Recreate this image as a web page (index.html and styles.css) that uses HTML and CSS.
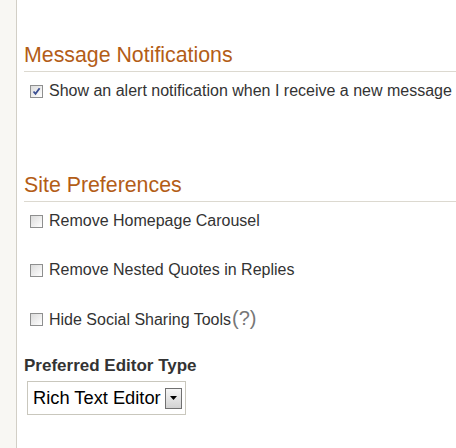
FILE: index.html
```html
<!DOCTYPE html>
<html>
<head>
<meta charset="utf-8">
<link rel="stylesheet" href="styles.css">
</head>
<body>
<div class="page">
  <div class="sidebar"></div>
  <div class="main">
    <h2 class="section-title first">Message Notifications</h2>
    <div class="option">
      <span class="check checked"><svg viewBox="0 0 11 11" width="11" height="11"><path d="M2.5 5.5 L4.5 7.8 L8.6 2.2" fill="none" stroke="#3a4e92" stroke-width="1.8"/></svg></span>
      <span class="label">Show an alert notification when I receive a new message</span>
    </div>

    <h2 class="section-title second">Site Preferences</h2>
    <div class="option">
      <span class="check"></span>
      <span class="label">Remove Homepage Carousel</span>
    </div>
    <div class="option spaced">
      <span class="check"></span>
      <span class="label">Remove Nested Quotes in Replies</span>
    </div>
    <div class="option spaced">
      <span class="check"></span>
      <span class="label">Hide Social Sharing Tools<span class="help">(?)</span></span>
    </div>

    <div class="field-label">Preferred Editor Type</div>
    <div class="select">
      <span class="select-text">Rich Text Editor</span>
      <span class="select-btn"><svg viewBox="0 0 7 4" width="7" height="4"><path d="M0 0 H7 L3.5 4 Z" fill="#000"/></svg></span>
    </div>
  </div>
</div>
</body>
</html>
```

FILE: styles.css
```css
html, body {
  margin: 0;
  padding: 0;
  background: #fff;
}
body {
  font-family: "Liberation Sans", Arial, sans-serif;
  color: #333;
}
.page {
  display: flex;
  min-height: 448px;
  overflow: hidden;
}
.sidebar {
  width: 16px;
  flex: 0 0 16px;
  background: #f8f7f3;
  border-right: 1px solid #d2cfc6;
}
.main {
  flex: 1;
  padding-left: 7px;
  white-space: nowrap;
  overflow: hidden;
}
.section-title {
  font-size: 21.33px;
  line-height: 24px;
  font-weight: normal;
  color: #b35d17;
  margin: 0;
  padding: 0 0 4px 0;
  border-bottom: 1px solid #dcd9d0;
}
.section-title.first {
  margin-top: 43px;
}
.section-title.second {
  margin-top: 73px;
}
.option {
  display: flex;
  align-items: center;
  margin-top: 10px;
  height: 18px;
  font-size: 16px;
  line-height: 18px;
}
.option.spaced {
  margin-top: 31px;
}
.check {
  box-sizing: border-box;
  flex: 0 0 13px;
  width: 13px;
  height: 13px;
  margin-left: 6px;
  margin-right: 6px;
  border: 1px solid #8e8f8f;
  background: linear-gradient(135deg, #dcdcdc 0%, #f4f4f4 70%, #fff 100%);
  display: flex;
  align-items: center;
  justify-content: center;
}
.check svg {
  display: block;
}
.label {
  color: #333;
}
.help {
  font-size: 20px;
  color: #777;
  margin-left: 1px;
}
.field-label {
  margin-top: 29px;
  font-size: 17px;
  line-height: 18px;
  font-weight: bold;
  color: #333;
}
.select {
  box-sizing: border-box;
  margin-top: 6px;
  margin-left: 3px;
  width: 159px;
  height: 34px;
  border: 1px solid #c9c7bd;
  display: flex;
  align-items: center;
  padding-left: 5px;
}
.select-text {
  font-size: 18.3px;
  color: #000;
}
.select-btn {
  box-sizing: border-box;
  margin-left: 4px;
  width: 17px;
  height: 21px;
  border: 1px solid #707070;
  background: linear-gradient(#f6f6f6, #d2d2d2);
  display: flex;
  align-items: center;
  justify-content: center;
}
.select-btn svg {
  display: block;
}
```
